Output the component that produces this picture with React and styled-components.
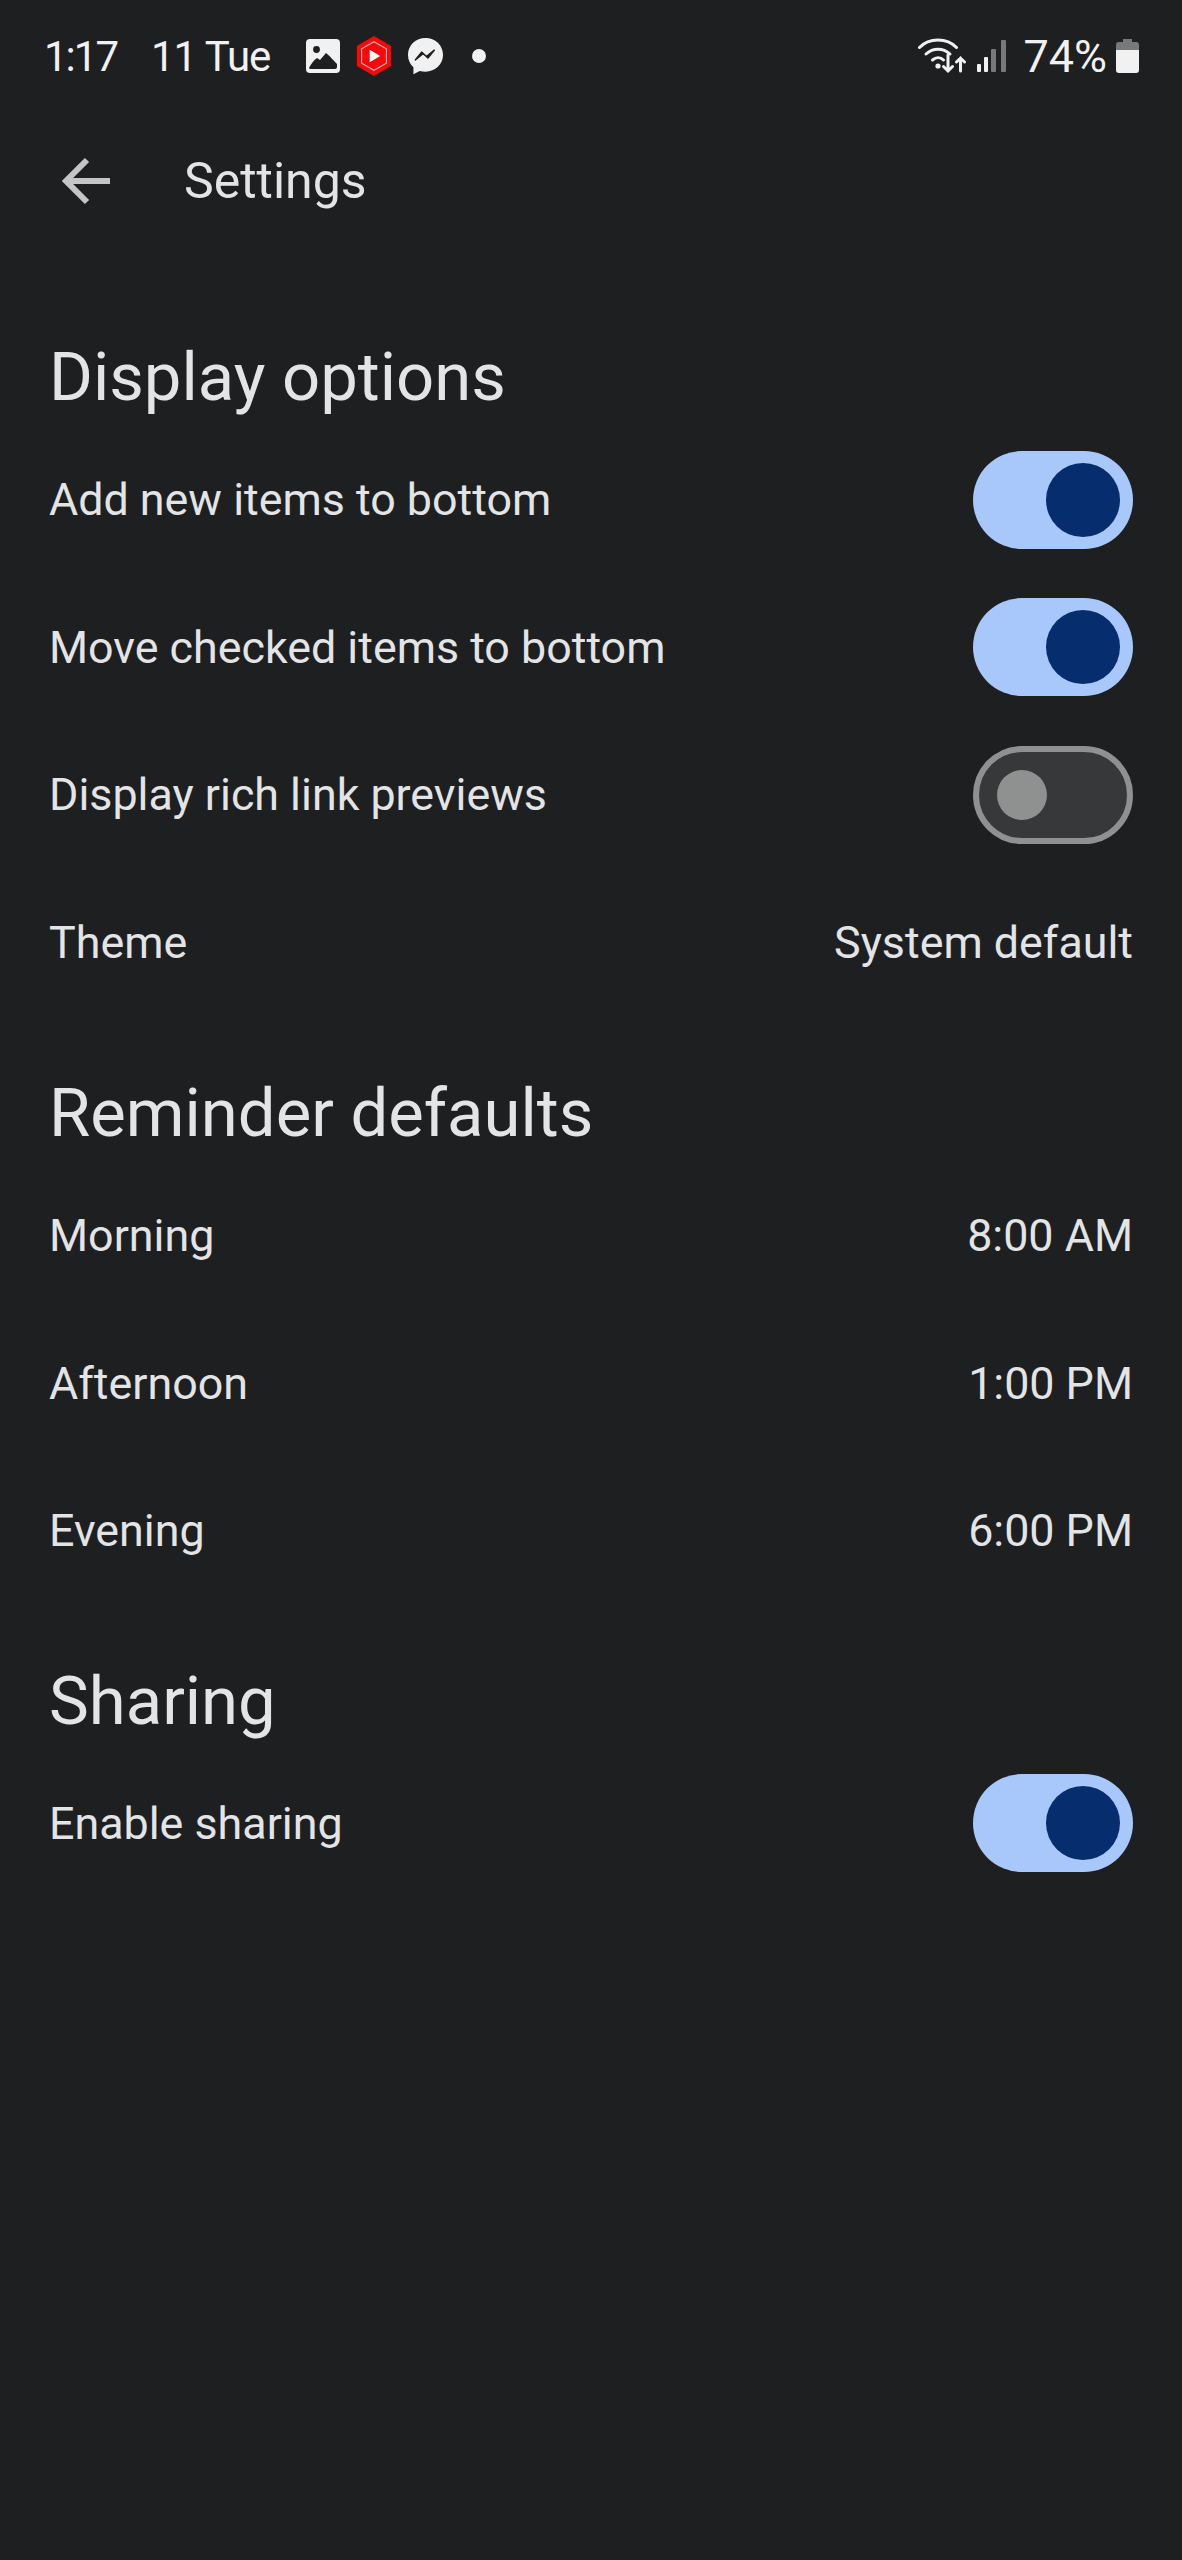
import React from 'react';
import styled, { createGlobalStyle } from 'styled-components';

const GlobalStyle = createGlobalStyle`
  html, body {
    margin: 0;
    padding: 0;
    background: #1e1f21;
  }
`;

const Page = styled.div`
  width: 1182px;
  height: 2560px;
  overflow: hidden;
  background: #1e1f21;
  color: #e8eaed;
  font-family: Roboto, "Noto Sans", sans-serif;
`;

const StatusBar = styled.div`
  height: 112px;
  padding: 0 43px 0 44px;
  box-sizing: border-box;
  display: flex;
  align-items: center;
  justify-content: space-between;
  color: #f1f1f1;
  font-size: 42px;
`;

const StatusGroup = styled.div`
  display: flex;
  align-items: center;
`;

const StatusText = styled.span`
  margin-right: ${(p) => p.$gap || 0}px;
  letter-spacing: ${(p) => p.$spacing || 0}px;
  font-size: ${(p) => p.$size || 42}px;
`;

const TopBar = styled.div`
  height: 138px;
  display: flex;
  align-items: center;
  padding-left: 61px;
`;

const BackButton = styled.svg`
  width: 50px;
  height: 50px;
  margin-right: 73px;
`;

const PageTitle = styled.h1`
  margin: 0;
  font-size: 50px;
  font-weight: 400;
  color: #e3e4e6;
`;

const Content = styled.div`
  padding: 83px 49px 0 49px;
`;

const Section = styled.section`
  margin-bottom: ${(p) => p.$after || 0}px;
`;

const SectionTitle = styled.h2`
  margin: 0;
  height: 93px;
  line-height: 88px;
  font-size: 67px;
  font-weight: 400;
  color: #e3e4e6;
`;

const Row = styled.div`
  height: 147.5px;
  display: flex;
  align-items: center;
  justify-content: space-between;
  font-size: 44.8px;
  color: #e3e4e6;
`;

const Switch = styled.div`
  width: 160px;
  height: 98px;
  box-sizing: border-box;
  border-radius: 49px;
  display: flex;
  align-items: center;
  background: ${(p) => (p.$on ? '#a8c7fa' : '#37383a')};
  border: ${(p) => (p.$on ? 'none' : '6px solid #8e918f')};
  justify-content: ${(p) => (p.$on ? 'flex-end' : 'flex-start')};
  padding: ${(p) => (p.$on ? '0 13px' : '0 18px')};
`;

const Knob = styled.div`
  width: ${(p) => (p.$on ? 74 : 50)}px;
  height: ${(p) => (p.$on ? 74 : 50)}px;
  border-radius: 50%;
  background: ${(p) => (p.$on ? '#062e6f' : '#8e918f')};
`;

const StatusIcon = styled.svg`
  display: block;
  flex: none;
  margin-right: ${(p) => p.$gap || 0}px;
  margin-left: ${(p) => p.$before || 0}px;
`;

const Dot = styled.span`
  width: 14px;
  height: 14px;
  border-radius: 50%;
  background: #f1f1f1;
`;

const Toggle = ({ on }) => (
  <Switch $on={on}>
    <Knob $on={on} />
  </Switch>
);

const PhotoIcon = () => (
  <StatusIcon width="34" height="34" viewBox="0 0 34 34" $gap={16}>
    <rect width="34" height="34" rx="4" fill="#f1f1f1" />
    <circle cx="10.500" cy="10.500" r="3.400" fill="#1e1f21" />
    <path d="M3 29c2-4 5-8 8-10l3 2 6-7c3 2 8 8 11 11v3c0 1-1 2-2 2H5c-1 0-2-.5-2-1z" fill="#1e1f21" />
  </StatusIcon>
);

const YtIcon = () => (
  <StatusIcon width="36" height="40" viewBox="0 0 36 42" $gap={15}>
    <path d="M18 0l18 10.500v21L18 42 0 31.500v-21z" fill="#f40a0a" />
    <path d="M18 6l13 7.500v15L18 36 5 28.500v-15z" fill="none" stroke="#ffb0b0" strokeWidth="1.200" />
    <path d="M13.500 14.500l11 6.500-11 6.500z" fill="#fff" />
  </StatusIcon>
);

const MessengerIcon = () => (
  <StatusIcon width="37" height="37" viewBox="0 0 36 38" $gap={28}>
    <path d="M18 0C8 0 0 7.400 0 17.300c0 5.200 2.100 9.700 5.600 12.800v7.200l6.500-3.500c1.900.5 3.800.8 5.900.8 10 0 18-7.400 18-17.300S28 0 18 0z" fill="#f1f1f1" />
    <path d="M7.500 22.500l6.500-8 5 4.500 8-6.500-6.500 8-5-4.500z" fill="#1e1f21" stroke="#1e1f21" strokeWidth="1.500" strokeLinejoin="round" />
  </StatusIcon>
);

const WifiIcon = () => (
  <StatusIcon width="48" height="36" viewBox="0 0 48 36" $gap={11}>
    <g fill="none" stroke="#f1f1f1" strokeWidth="3" strokeLinecap="round">
      <path d="M1.500 9.500C11-.5 29-.5 38.500 9.500" />
      <path d="M8 16c7-6.500 17-6.500 24 0" />
      <path d="M14.500 22c3.500-3 8-3 11 0" />
      <path d="M30 17v16M25.500 28.500l4.500 4.500 4.500-4.500" />
      <path d="M42.500 33V20M38.500 24l4-4 4 4" />
    </g>
    <circle cx="20" cy="28" r="2.600" fill="#f1f1f1" />
  </StatusIcon>
);

const SignalIcon = () => (
  <StatusIcon width="30" height="32" viewBox="0 0 30 32" $gap={16}>
    <rect x="0" y="24" width="4" height="8" rx="1" fill="#f1f1f1" />
    <rect x="7" y="17" width="4" height="15" rx="1" fill="#f1f1f1" />
    <rect x="14" y="9" width="5" height="23" rx="1" fill="#77797a" />
    <rect x="24" y="0" width="5" height="32" rx="1" fill="#77797a" />
  </StatusIcon>
);

const BatteryIcon = () => (
  <StatusIcon width="23" height="34" viewBox="0 0 23 34" $before={9}>
    <path d="M7 0h9v3h4a3 3 0 0 1 3 3v5H0V6a3 3 0 0 1 3-3h4z" fill="#77797a" />
    <path d="M0 11h23v20a3 3 0 0 1-3 3H3a3 3 0 0 1-3-3z" fill="#f1f1f1" />
  </StatusIcon>
);

const App = () => (
  <Page>
    <GlobalStyle />
    <StatusBar>
      <StatusGroup>
        <StatusText $gap={34} $spacing={-2}>1:17</StatusText>
        <StatusText $gap={36} $spacing={-1}>11 Tue</StatusText>
        <PhotoIcon />
        <YtIcon />
        <MessengerIcon />
        <Dot />
      </StatusGroup>
      <StatusGroup>
        <WifiIcon />
        <SignalIcon />
        <StatusText $size={45}>74%</StatusText>
        <BatteryIcon />
      </StatusGroup>
    </StatusBar>
    <TopBar>
      <BackButton viewBox="0 0 50 50">
        <path d="M49 25H5M26 4L5 25l21 21" fill="none" stroke="#c4c5c7" strokeWidth="6" />
      </BackButton>
      <PageTitle>Settings</PageTitle>
    </TopBar>
    <Content>
      <Section $after={53}>
        <SectionTitle>Display options</SectionTitle>
        <Row>Add new items to bottom<Toggle on /></Row>
        <Row>Move checked items to bottom<Toggle on /></Row>
        <Row>Display rich link previews<Toggle /></Row>
        <Row>Theme<span>System default</span></Row>
      </Section>
      <Section $after={52}>
        <SectionTitle>Reminder defaults</SectionTitle>
        <Row>Morning<span>8:00 AM</span></Row>
        <Row>Afternoon<span>1:00 PM</span></Row>
        <Row>Evening<span>6:00 PM</span></Row>
      </Section>
      <Section>
        <SectionTitle>Sharing</SectionTitle>
        <Row>Enable sharing<Toggle on /></Row>
      </Section>
    </Content>
  </Page>
);

export default App;
